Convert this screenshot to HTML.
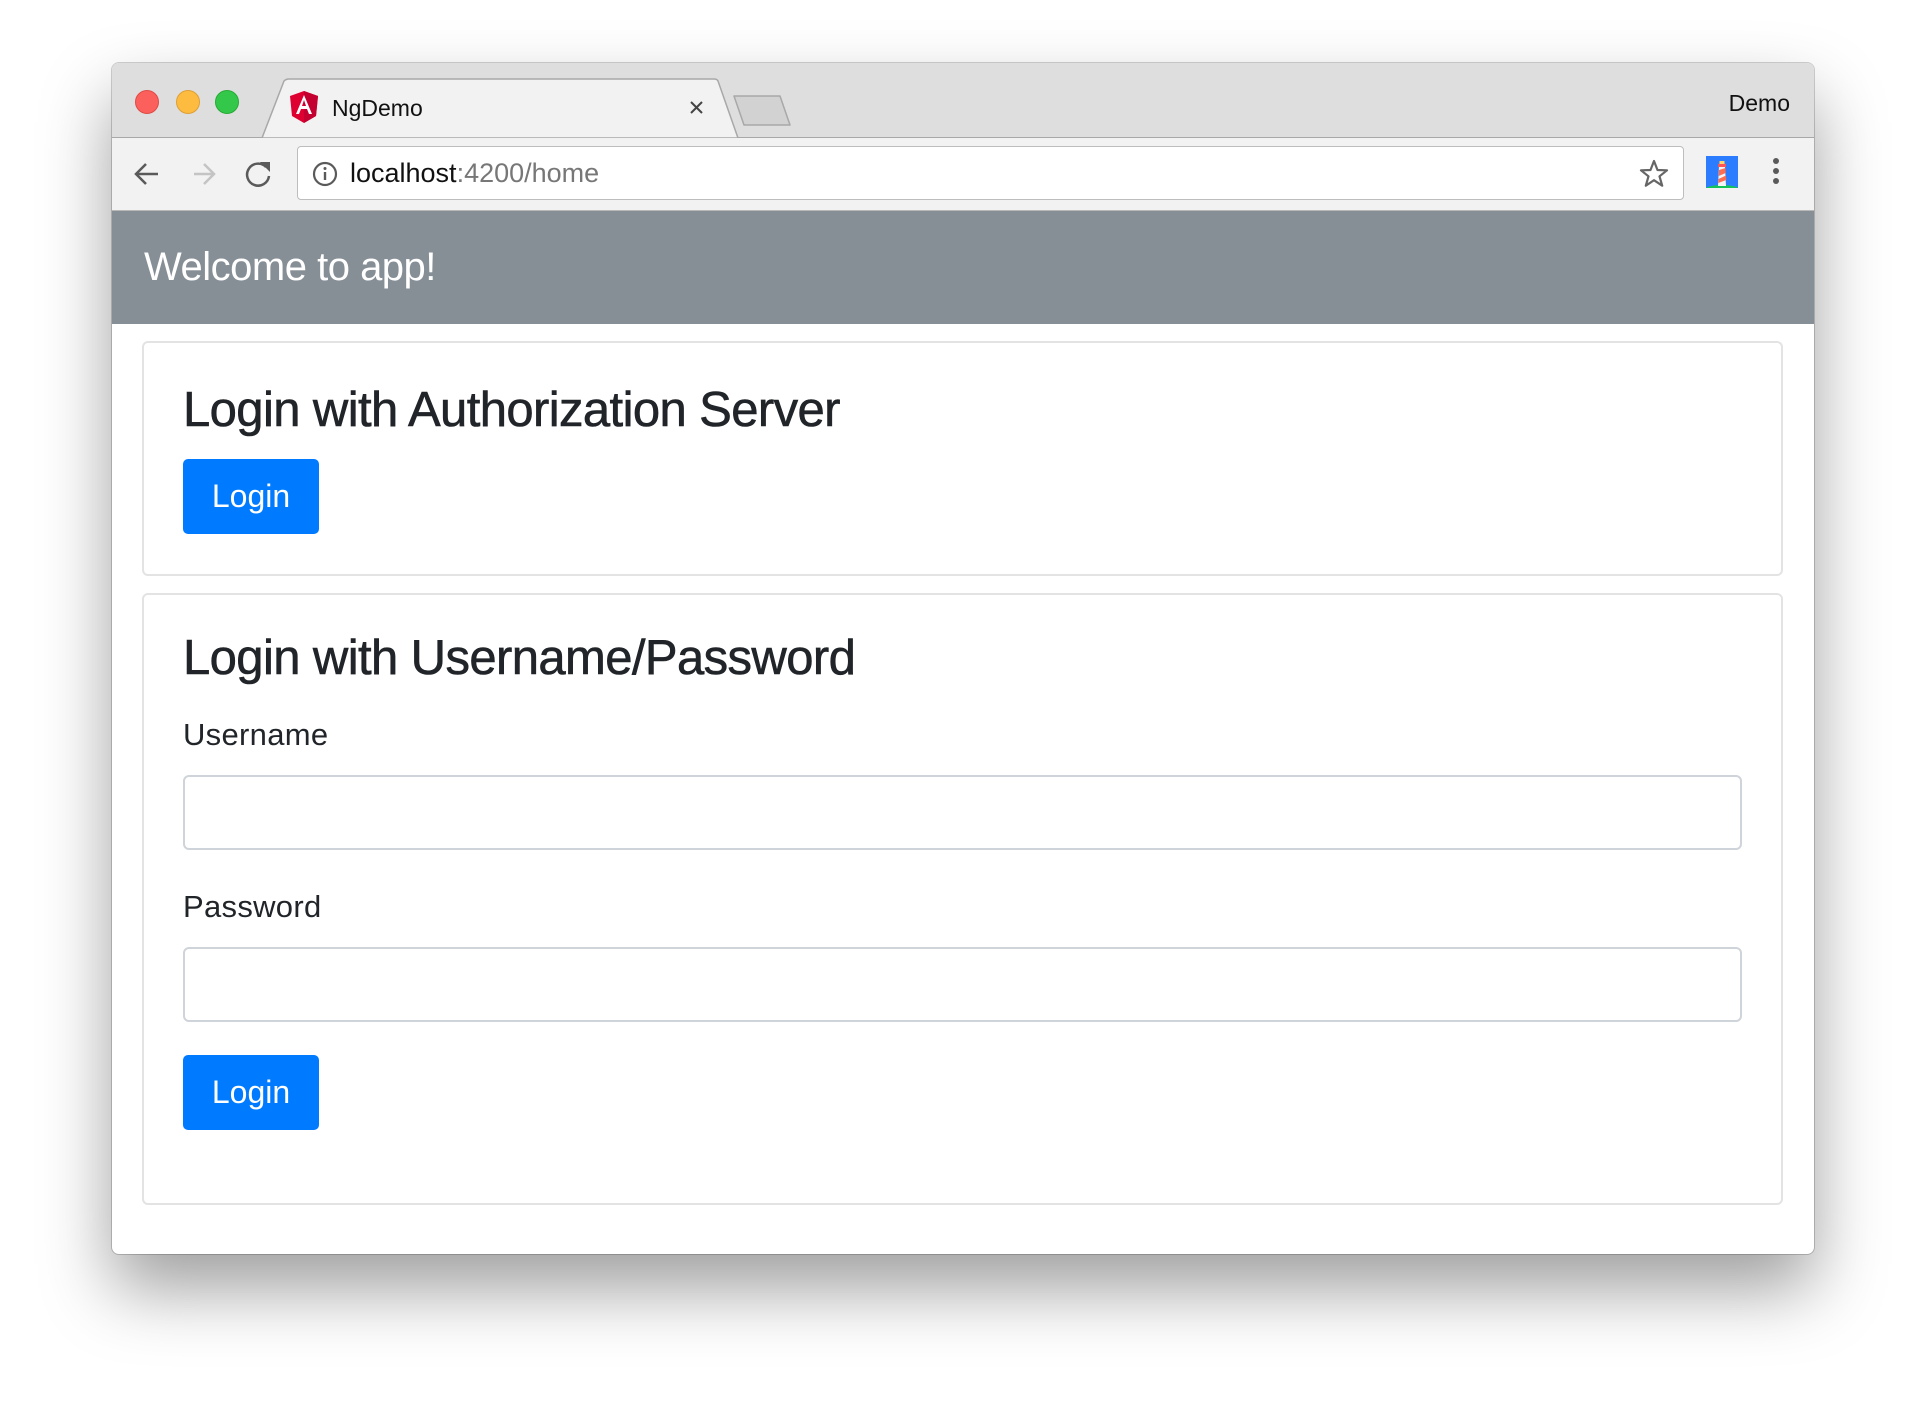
<!DOCTYPE html>
<html><head><meta charset="utf-8"><style>
*{box-sizing:border-box;margin:0;padding:0}
body{width:1926px;height:1414px;background:#fff;font-family:"Liberation Sans",Arial,sans-serif;position:relative;overflow:hidden}
.win{position:absolute;left:112px;top:63px;width:1702px;height:1191px;border-radius:7px;background:#fff;box-shadow:0 35px 70px rgba(0,0,0,.38),0 0 0 1px rgba(0,0,0,.18);overflow:hidden}
.tabbar{position:absolute;left:0;top:0;width:100%;height:75px;background:#dedede;border-bottom:1px solid #a8a8a8}
.dot{position:absolute;top:27px;width:24px;height:24px;border-radius:50%}
.toolbar{position:absolute;left:0;top:75px;width:100%;height:73px;background:#f2f2f2;border-bottom:1px solid #b8b8b8}
.omni{position:absolute;left:185px;top:8px;width:1387px;height:54px;background:#fff;border:1px solid #bdbdbd;border-radius:4px}
.hdr{position:absolute;left:0;top:148px;width:100%;height:113px;background:#868e96;color:#fff;font-size:40px;padding-left:32px;line-height:113px;letter-spacing:-0.5px}
.card{position:absolute;left:30px;width:1641px;border:2px solid #e3e3e3;border-radius:6px;background:#fff}
h2{position:absolute;left:39px;font-size:49px;font-weight:normal;color:#212529;letter-spacing:-0.6px;white-space:nowrap;-webkit-text-stroke:0.6px #212529}
.btn{position:absolute;left:39px;width:136px;height:75px;background:#007bff;border-radius:5px;color:#fff;font-size:32px;text-align:center;line-height:75px}
.lbl{position:absolute;left:39px;font-size:31px;color:#212529;letter-spacing:0.3px}
.inp{position:absolute;left:39px;width:1559px;height:75px;border:2px solid #ced4da;border-radius:6px}
</style></head><body>
<div class="win">
 <div class="tabbar">
  <div class="dot" style="left:23px;background:#fc605c;border:1px solid #de4a45"></div>
  <div class="dot" style="left:64px;background:#fdbc40;border:1px solid #de9f34"></div>
  <div class="dot" style="left:103px;background:#34c84a;border:1px solid #27aa35"></div>
  <svg style="position:absolute;left:0;top:0" width="720" height="76">
   <path d="M150 75 L172 18 Q174 16 177 16 L602 16 Q605 16 606 18 L626 75 Z" fill="#f2f2f2" stroke="#a8a8a8" stroke-width="1.5"/>
   <path d="M622 33 L668 33 L678 62 L632 62 Z" fill="#d2d2d2" stroke="#a8a8a8" stroke-width="1.5" stroke-linejoin="round"/>
   <path d="M178 33 L192 28 L206 33 L204 53 L192 60 L180 53 Z" fill="#dd0031"/>
   <path d="M192 28 L206 33 L204 53 L192 60 Z" fill="#c3002f"/>
   <path d="M192 32 L184 51 L187 51 L189 46 L195 46 L197 51 L200 51 Z M190 43 L192 37 L194 43 Z" fill="#fff"/>
   <path d="M579 39 L590 50 M590 39 L579 50" stroke="#444" stroke-width="2"/>
  </svg>
  <div style="position:absolute;left:220px;top:32px;font-size:23px;color:#111">NgDemo</div>
  <div style="position:absolute;right:24px;top:27px;font-size:23px;color:#111">Demo</div>
 </div>
 <div class="toolbar">
  <svg style="position:absolute;left:0;top:0" width="190" height="73">
   <path d="M46 36 H24 M34 26 L24 36 L34 46" stroke="#5a5a5a" stroke-width="2.5" fill="none"/>
   <path d="M82 36 H102 M92 26 L102 36 L92 46" stroke="#c4c4c4" stroke-width="2.5" fill="none"/>
   <path d="M154 29 A11 11 0 1 0 157 38" stroke="#5a5a5a" stroke-width="2.5" fill="none"/>
   <path d="M148 24 L158 24 L158 34 Z" fill="#5a5a5a"/>
  </svg>
  <div class="omni">
   <svg style="position:absolute;left:14px;top:14px" width="26" height="26"><circle cx="13" cy="13" r="11" stroke="#5a5a5a" stroke-width="2.2" fill="none"/><rect x="11.8" y="11" width="2.4" height="8" fill="#5a5a5a"/><circle cx="13" cy="7.5" r="1.5" fill="#5a5a5a"/></svg>
   <div style="position:absolute;left:52px;top:11px;font-size:27px;color:#111">localhost<span style="color:#777">:4200/home</span></div>
   <svg style="position:absolute;right:14px;top:12px" width="30" height="30"><path d="M15 2 L18.5 11 L28 11.3 L20.5 17.3 L23.2 26.7 L15 21.2 L6.8 26.7 L9.5 17.3 L2 11.3 L11.5 11 Z" stroke="#666" stroke-width="2.2" fill="none" stroke-linejoin="round"/></svg>
  </div>
  <svg style="position:absolute;left:1594px;top:18px" width="32" height="32"><rect width="32" height="32" fill="#2b7cff"/><ellipse cx="16" cy="34" rx="18" ry="5" fill="#13c25a"/><path d="M13 10 H19 L20 30 H12 Z" fill="#f4f4f4"/><path d="M13 14 L19.5 12 L19.7 17 L12.7 20 Z M12.5 23 L20 19.5 L20.3 24 L12.2 27 Z" fill="#ff6d4f"/><rect x="12" y="8" width="8" height="3" fill="#f55"/><path d="M13 8 Q16 2 19 8Z" fill="#ff6d4f"/><rect x="13.5" y="5" width="5" height="3" fill="#ffd56b"/></svg>
  <svg style="position:absolute;left:1658px;top:18px" width="12" height="36"><circle cx="6" cy="5" r="3" fill="#5a5a5a"/><circle cx="6" cy="15" r="3" fill="#5a5a5a"/><circle cx="6" cy="25" r="3" fill="#5a5a5a"/></svg>
 </div>
 <div class="hdr">Welcome to app!</div>
 <div class="card" style="top:278px;height:235px">
  <h2 style="top:39px">Login with Authorization Server</h2>
  <div class="btn" style="top:116px">Login</div>
 </div>
 <div class="card" style="top:530px;height:612px">
  <h2 style="top:35px">Login with Username/Password</h2>
  <div class="lbl" style="top:122px">Username</div>
  <div class="inp" style="top:180px"></div>
  <div class="lbl" style="top:294px">Password</div>
  <div class="inp" style="top:352px"></div>
  <div class="btn" style="top:460px">Login</div>
 </div>
</div>
</body></html>
